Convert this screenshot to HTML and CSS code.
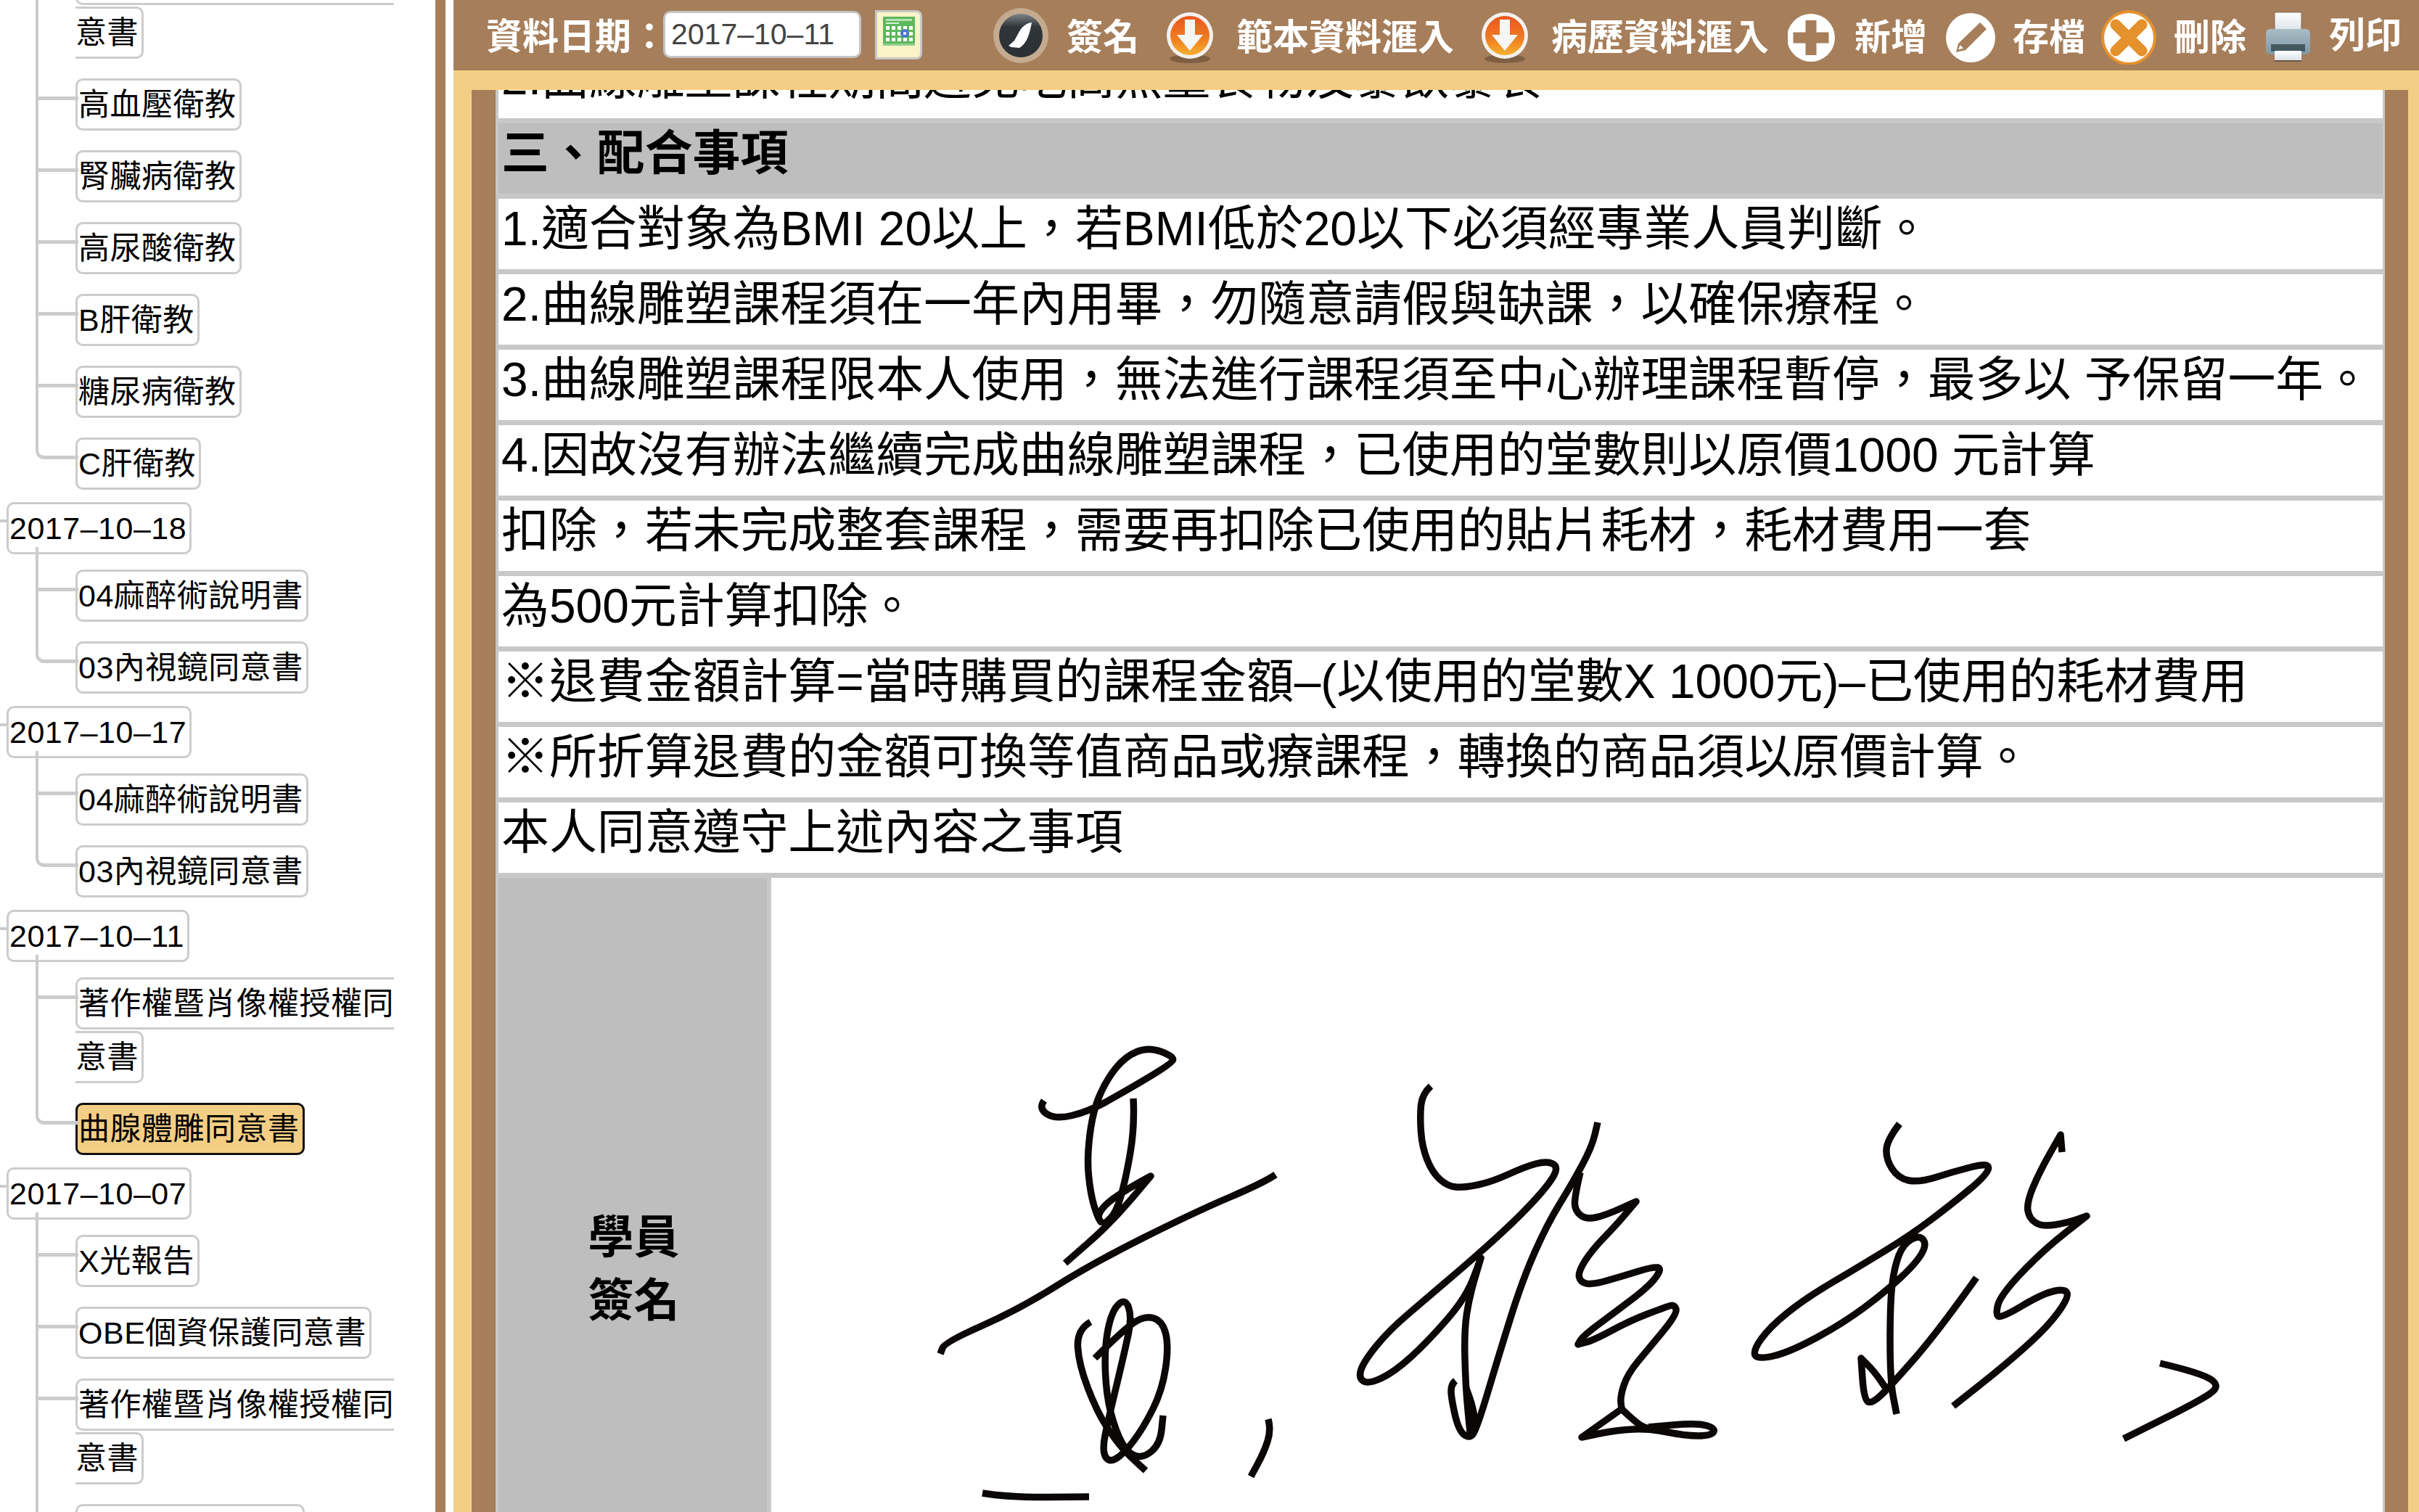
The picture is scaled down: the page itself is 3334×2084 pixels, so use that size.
FILE: index.html
```html
<!DOCTYPE html>
<html lang="zh-Hant">
<head>
  <meta charset="UTF-8" />
  <title>曲腺體雕同意書</title>
  <link rel="stylesheet" href="styles.css">
</head>
<body>

  <aside class="sidebar">
    <ul class="tree">
      <li class="day">
        <ul class="docs">
          <li><span class="node">著作權暨肖像權授權同意書</span></li>
          <li><span class="node">高血壓衛教</span></li>
          <li><span class="node">腎臟病衛教</span></li>
          <li><span class="node">高尿酸衛教</span></li>
          <li><span class="node">B肝衛教</span></li>
          <li><span class="node">糖尿病衛教</span></li>
          <li><span class="node">C肝衛教</span></li>
        </ul>
      </li>
      <li class="day">
        <span class="node">2017–10–18</span>
        <ul class="docs">
          <li><span class="node">04麻醉術說明書</span></li>
          <li><span class="node">03內視鏡同意書</span></li>
        </ul>
      </li>
      <li class="day">
        <span class="node">2017–10–17</span>
        <ul class="docs">
          <li><span class="node">04麻醉術說明書</span></li>
          <li><span class="node">03內視鏡同意書</span></li>
        </ul>
      </li>
      <li class="day">
        <span class="node">2017–10–11</span>
        <ul class="docs">
          <li><span class="node">著作權暨肖像權授權同意書</span></li>
          <li><span class="node selected">曲腺體雕同意書</span></li>
        </ul>
      </li>
      <li class="day">
        <span class="node">2017–10–07</span>
        <ul class="docs">
          <li><span class="node">X光報告</span></li>
          <li><span class="node">OBE個資保護同意書</span></li>
          <li><span class="node">著作權暨肖像權授權同意書</span></li>
          <li><span class="node">曲腺體雕同意書</span></li>
        </ul>
      </li>
    </ul>
  </aside>

  <main class="main">
    <div class="toolbar">
      <label class="date-label" for="recordDate">資料日期：</label>
      <input class="date-input" id="recordDate" type="text" value="2017–10–11" />
      <button class="cal-btn" type="button" title="calendar">
        <svg width="44" height="40" viewBox="0 0 44 40">
          <rect width="44" height="40" fill="#5cb85c" />
          <rect y="37" width="44" height="3" fill="#8fd08f" />
          <rect x="4" y="3" width="36" height="3" fill="#b8e2b8" />
          <rect x="4" y="8" width="18" height="2" fill="#d6efd6" />
          <g fill="#fff">
            <rect x="4" y="13" width="5" height="5" /><rect x="12" y="13" width="5" height="5" /><rect x="20" y="13" width="5" height="5" /><rect x="28" y="13" width="5" height="5" /><rect x="36" y="13" width="5" height="5" />
            <rect x="4" y="21" width="5" height="5" /><rect x="12" y="21" width="5" height="5" /><rect x="20" y="21" width="5" height="5" /><rect x="36" y="21" width="5" height="5" />
            <rect x="4" y="29" width="5" height="5" /><rect x="12" y="29" width="5" height="5" /><rect x="20" y="29" width="5" height="5" /><rect x="28" y="29" width="5" height="5" /><rect x="36" y="29" width="5" height="5" />
          </g>
          <circle cx="30" cy="23" r="6" fill="#4a74d0" />
          <rect x="28" y="21" width="4" height="4" fill="#dce6fa" />
        </svg>
      </button>

      <a class="tool first">
        <svg width="78" height="78" viewBox="0 0 78 78">
          <defs>
            <linearGradient id="quillBg" x1="0" y1="0" x2="0" y2="1">
              <stop offset="0" stop-color="#7e8488" />
              <stop offset="0.3" stop-color="#2f3539" />
              <stop offset="1" stop-color="#2a3033" />
            </linearGradient>
          </defs>
          <circle cx="39" cy="39" r="38" fill="#c4ab90" />
          <circle cx="39" cy="39" r="30" fill="url(#quillBg)" />
          <path d="M54 21 C46 22 40 27 36 35 L30 46 L22 53 L26 55 L37 56 C44 52 50 44 54 21Z" fill="#fff" />
        </svg>
        <span>簽名</span>
      </a>
      <a class="tool">
        <svg width="84" height="80" viewBox="0 0 84 80">
          <defs>
            <linearGradient id="dlBg" x1="0" y1="0" x2="0" y2="1">
              <stop offset="0" stop-color="#e8571f" />
              <stop offset="0.55" stop-color="#ef7a22" />
              <stop offset="1" stop-color="#f6b02c" />
            </linearGradient>
          </defs>
          <ellipse cx="44" cy="72" rx="28" ry="6" fill="#6e5238" opacity="0.7" />
          <circle cx="44" cy="40" r="32" fill="#f3f1ee" />
          <circle cx="44" cy="40" r="27" fill="url(#dlBg)" />
          <path d="M37 18 H51 V39 H62 L44 61 L26 39 H37Z" fill="#f6f6f4" />
        </svg>
        <span>範本資料滙入</span>
      </a>
      <a class="tool">
        <svg width="84" height="80" viewBox="0 0 84 80">
          <ellipse cx="44" cy="72" rx="28" ry="6" fill="#6e5238" opacity="0.7" />
          <circle cx="44" cy="40" r="32" fill="#f3f1ee" />
          <circle cx="44" cy="40" r="27" fill="url(#dlBg)" />
          <path d="M37 18 H51 V39 H62 L44 61 L26 39 H37Z" fill="#f6f6f4" />
        </svg>
        <span>病歷資料滙入</span>
      </a>
      <a class="tool">
        <svg width="68" height="76" viewBox="0 0 68 76">
          <circle cx="32" cy="41" r="33" fill="#fff" />
          <path d="M24.500 17 H39.500 V33.500 H56.500 V48.500 H39.500 V65 H24.500 V48.500 H7.500 V33.500 H24.500Z" fill="#a67e5a" />
        </svg>
        <span>新增</span>
      </a>
      <a class="tool">
        <svg width="68" height="76" viewBox="0 0 68 76">
          <circle cx="34" cy="41" r="34" fill="#fff" />
          <path d="M47 20 L56 29 L27 58 L14 61 L17 49Z" fill="#a67e5a" />
          <path d="M19.500 51 L24 55.500 L17 57.500Z" fill="#fff" />
        </svg>
        <span>存檔</span>
      </a>
      <a class="tool delete">
        <svg width="76" height="80" viewBox="0 0 76 80">
          <circle cx="38" cy="43" r="38" fill="#e5912c" />
          <circle cx="38" cy="43" r="34" fill="#fff" />
          <path d="M20 25 L38 43 M56 25 L38 43 M20 61 L38 43 M56 61 L38 43" stroke="#e5912c" stroke-width="15" stroke-linecap="round" />
        </svg>
        <span>刪除</span>
      </a>
      <a class="tool print">
        <svg width="64" height="72" viewBox="0 0 64 72">
          <defs>
            <linearGradient id="paperBg" x1="0" y1="0" x2="0" y2="1">
              <stop offset="0" stop-color="#ffffff" />
              <stop offset="1" stop-color="#d6e0e6" />
            </linearGradient>
            <linearGradient id="printBg" x1="0" y1="0" x2="0" y2="1">
              <stop offset="0" stop-color="#a9bcc6" />
              <stop offset="1" stop-color="#7f98a5" />
            </linearGradient>
          </defs>
          <rect x="13" y="4" width="37" height="28" fill="url(#paperBg)" stroke="#7d6a58" stroke-width="1" />
          <rect x="1" y="27" width="61" height="35" rx="6" fill="url(#printBg)" />
          <rect x="8" y="48" width="47" height="10" fill="#46585f" />
          <rect x="13" y="57" width="37" height="14" fill="url(#paperBg)" />
          <rect x="13" y="70" width="37" height="2" fill="#6a5440" />
        </svg>
        <span>列印</span>
      </a>
    </div>

    <div class="frame">
      <div class="panel">
        <div class="sheet">
          <div class="row">2.曲線雕塑課程期間避免吃高熱量食物及暴飲暴食</div>
          <div class="row title">三、配合事項</div>
          <div class="row">1.適合對象為BMI 20以上，若BMI低於20以下必須經專業人員判斷。</div>
          <div class="row">2.曲線雕塑課程須在一年內用畢，勿隨意請假與缺課，以確保療程。</div>
          <div class="row">3.曲線雕塑課程限本人使用，無法進行課程須至中心辦理課程暫停，最多以 予保留一年。</div>
          <div class="row">4.因故沒有辦法繼續完成曲線雕塑課程，已使用的堂數則以原價1000 元計算</div>
          <div class="row">扣除，若未完成整套課程，需要再扣除已使用的貼片耗材，耗材費用一套</div>
          <div class="row">為500元計算扣除。</div>
          <div class="row">※退費金額計算=當時購買的課程金額–(以使用的堂數X 1000元)–已使用的耗材費用</div>
          <div class="row">※所折算退費的金額可換等值商品或療課程，轉換的商品須以原價計算。</div>
          <div class="row">本人同意遵守上述內容之事項</div>
          <div class="sign-row">
            <div class="sign-label">學員<br>簽名</div>
            <div class="sign-box">
              <svg id="signature" width="2221" height="1078" viewBox="1063 1209 2221 1078"></svg>
            </div>
          </div>
        </div>
      </div>
    </div>
  </main>

  <script src="signature.js"></script>
</body>
</html>
```

FILE: styles.css
```css
* { box-sizing: border-box; }
html, body { height: 100%; }
body {
  margin: 0;
  display: flex;
  overflow: hidden;
  background: #fff;
  color: #000;
  font-family: "Liberation Sans", "Noto Sans CJK TC", sans-serif;
}

/* left tree */
.sidebar {
  flex: none;
  width: 614px;
  height: 100%;
  padding-right: 55px;
  border-right: 14px solid #a67e5a;
  overflow: hidden;
}
.tree, .docs {
  list-style: none;
  margin: 0;
  padding: 0;
}
.tree {
  margin-top: -66px;
  padding-left: 9px;
  font-size: 43px;
  letter-spacing: 0.5px;
  line-height: 74px;
}
.day {
  position: relative;
  margin-bottom: 15px;
}
.day > .node::before {
  content: "";
  position: absolute;
  left: -9px;
  top: 25px;
  width: 9px;
  height: 4px;
  background: #ccc;
}
.docs {
  padding-left: 95px;
  margin-top: 19px;
}
.docs li {
  position: relative;
  margin-top: 25px;
}
.day:first-child .docs { margin-top: 0; }
.docs li:first-child { margin-top: 0; }
.docs li::before {
  content: "";
  position: absolute;
  left: -55px;
  top: -30px;
  width: 55px;
  height: 56px;
  border-left: 4px solid #ccc;
  border-bottom: 5px solid #ccc;
}
.docs li:last-child::before { border-radius: 0 0 0 12px; }
.docs li:not(:last-child)::after {
  content: "";
  position: absolute;
  left: -55px;
  top: 20px;
  bottom: -10px;
  border-left: 4px solid #ccc;
}
.node {
  padding: 9px 4px 9px 1px;
  border: 3px solid #ccc;
  border-radius: 10px;
  background: #fff;
}
.node.selected {
  background: #f4ce84;
  border-color: #111;
}

/* right side */
.main {
  flex: none;
  width: 2709px;
  height: 100%;
  margin-left: 11px;
  display: flex;
  flex-direction: column;
  background: #f4ce84;
}
.toolbar {
  flex: none;
  height: 97px;
  padding-left: 45px;
  display: flex;
  align-items: center;
  background: #a67e5a;
  color: #fff;
  font-weight: bold;
  font-size: 50px;
  white-space: nowrap;
}
.date-label {
  width: 244px;
  flex: none;
  margin-top: -6px;
}
.date-input {
  flex: none;
  width: 273px;
  height: 65px;
  margin-top: -3px;
  padding: 0 8px;
  border: 3px solid #c4c4c4;
  border-radius: 10px;
  background: #fff;
  color: #444;
  font-family: "Liberation Sans", sans-serif;
  font-size: 41px;
}
.cal-btn {
  flex: none;
  width: 65px;
  height: 68px;
  margin-left: 19px;
  margin-top: -1px;
  padding: 0 0 10px;
  display: flex;
  align-items: center;
  justify-content: center;
  border: 3px solid #c8c8c8;
  border-radius: 0 8px 8px 0;
  background: #fbf3c8;
}
.tool {
  flex: none;
  display: flex;
  align-items: center;
  gap: 24px;
  margin-left: 26px;
  color: #fff;
}
.tool span { margin-top: -3px; }
.tool.first { margin-left: 97px; }
.tool.delete { margin-left: 22px; }
.tool.print span { margin-top: -9px; }
.tool svg { flex: none; }

.frame {
  flex: 1;
  min-height: 0;
  padding: 27px 15px 0 25px;
  display: flex;
}
.panel {
  flex: 1;
  min-width: 0;
  border-left: 33px solid #a67e5a;
  border-right: 32px solid #a67e5a;
  overflow: hidden;
  background: #fff;
}
.sheet {
  margin-top: -58px;
  border-left: 4px solid #c8c8c8;
  border-right: 3px solid #c8c8c8;
  font-size: 65.900px;
}
.row {
  height: 104px;
  padding-left: 4px;
  border-bottom: 7px solid #c8c8c8;
  line-height: 82px;
  white-space: nowrap;
}
.row.title {
  background: #bebebe;
  font-weight: bold;
}
.sign-row {
  display: flex;
  height: 1078px;
}
.sign-label {
  flex: none;
  width: 376px;
  padding-left: 3px;
  display: flex;
  align-items: center;
  justify-content: center;
  text-align: center;
  border-right: 6px solid #c8c8c8;
  background: #bebebe;
  font-weight: bold;
  font-size: 63px;
  line-height: 87px;
}
.sign-box { flex: 1; }
.sign-box svg { display: block; }
```

FILE: signature.js
```js
// stored pen strokes, drawn smooth through the midpoints.
// a point given twice is a sharp corner.
const strokes = [
  [[1439,1516],[1431,1527],[1455,1542],[1500,1531],[1544,1507],[1615,1465],[1618,1455],[1583,1442],[1551,1455],[1525,1487],[1506,1531],[1498,1596],[1503,1644],[1512,1675],[1519,1686],[1512,1675],[1525,1657],[1557,1636],[1586,1620],[1586,1620],[1532,1684],[1468,1740]],
  [[1562,1513],[1564,1553],[1551,1627],[1538,1671],[1522,1686]],
  [[1758,1618],[1742,1629],[1646,1670],[1506,1740],[1404,1804],[1302,1849],[1296,1865]],
  [[1503,1821],[1484,1832],[1487,1880],[1512,1945],[1538,1985],[1557,2006],[1579,2026]],
  [[1509,1871],[1544,1836],[1576,1812],[1602,1819],[1611,1854],[1602,1915],[1576,1967],[1548,2004],[1528,2015],[1519,1998],[1527,1958],[1551,1858],[1560,1814],[1551,1788],[1532,1806],[1522,1858],[1525,1924],[1538,1972],[1554,2002],[1576,2009],[1599,1989],[1603,1950]],
  [[1748,1955],[1752,1970],[1742,2001],[1724,2034]],
  [[1354,2057],[1391,2063],[1501,2062]],
  [[1972,1496],[1960,1507],[1957,1538],[1960,1580],[1974,1615],[1995,1634],[2018,1636],[2056,1628],[2102,1607],[2132,1599],[2148,1607],[2136,1630],[2098,1672],[2044,1722],[1968,1787],[1914,1833],[1880,1875],[1872,1898],[1886,1907],[1922,1890],[1968,1848],[2021,1787],[2041,1733],[2041,1733],[2025,1787],[2018,1833],[2020,1909],[2025,1963],[2027,1980]],
  [[2006,1902],[2000,1907],[2000,1925],[2010,1970],[2025,1982],[2035,1970],[2067,1863],[2098,1764],[2132,1687],[2167,1630],[2194,1580],[2202,1546]],
  [[2021,1913],[2033,1944],[2031,1974]],
  [[2178,1615],[2170,1649],[2171,1668],[2186,1680],[2213,1674],[2255,1655],[2255,1655],[2228,1687],[2194,1722],[2175,1752],[2178,1766],[2194,1770],[2236,1758],[2278,1745],[2291,1747],[2274,1771],[2228,1806],[2182,1840],[2175,1852],[2175,1852],[2197,1846],[2247,1819],[2297,1800],[2308,1797],[2312,1810],[2272,1858],[2243,1893],[2233,1924],[2235,1941],[2235,1941],[2180,1980],[2180,1980],[2228,1970],[2274,1968],[2323,1978],[2358,1978],[2365,1968],[2340,1960],[2272,1966]],
  [[2235,1941],[2258,1963],[2272,1968]],
  [[2618,1548],[2601,1570],[2599,1596],[2616,1623],[2645,1629],[2692,1614],[2742,1601],[2739,1618],[2692,1657],[2634,1701],[2562,1745],[2489,1788],[2439,1828],[2415,1862],[2424,1873],[2468,1862],[2540,1823],[2598,1780],[2641,1740],[2656,1714],[2645,1701],[2623,1714],[2611,1745],[2605,1793],[2605,1902],[2614,1948]],
  [[2724,1760],[2670,1836],[2605,1910],[2580,1934],[2569,1928],[2565,1871],[2565,1871],[2583,1889],[2601,1915]],
  [[2842,1587],[2840,1563],[2840,1563],[2811,1614],[2793,1657],[2797,1679],[2815,1690],[2851,1684],[2876,1675],[2876,1675],[2815,1723],[2757,1784],[2750,1812],[2760,1815],[2815,1782],[2847,1775],[2851,1788],[2822,1828],[2764,1880],[2692,1937]],
  [[2977,1878],[3032,1891],[3060,1908],[3039,1926],[2927,1982]]
];

const svg = document.getElementById('signature');

strokes.forEach(points => {
  let d = 'M' + points[0].join(' ');
  for (let i = 1; i < points.length - 1; i++) {
    const [x, y] = points[i];
    const [nx, ny] = points[i + 1];
    d += ' Q' + x + ' ' + y + ' ' + (x + nx) / 2 + ' ' + (y + ny) / 2;
  }
  d += ' L' + points[points.length - 1].join(' ');

  const path = document.createElementNS('http://www.w3.org/2000/svg', 'path');
  path.setAttribute('d', d);
  path.setAttribute('fill', 'none');
  path.setAttribute('stroke', '#0a0706');
  path.setAttribute('stroke-width', '9.5');
  path.setAttribute('stroke-linejoin', 'round');
  svg.appendChild(path);
});
```
